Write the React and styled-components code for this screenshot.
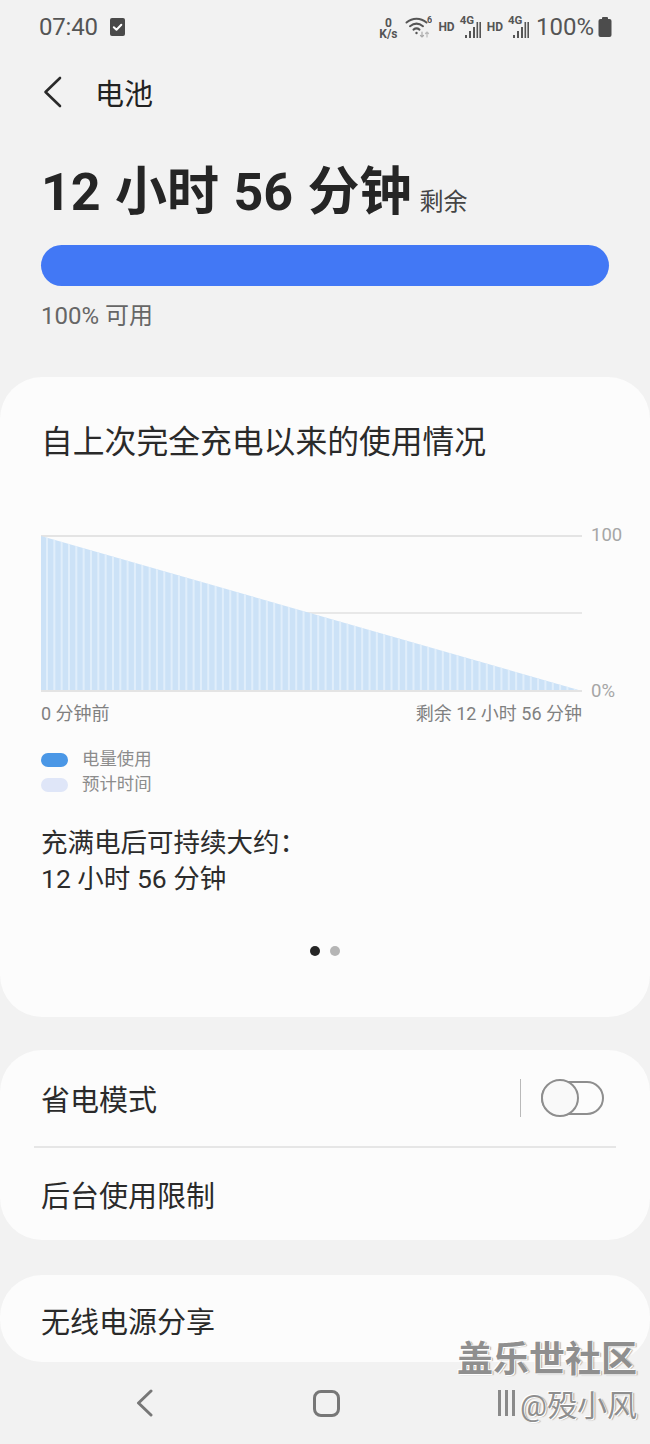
import styled, { createGlobalStyle } from "styled-components";

const GlobalStyle = createGlobalStyle`
  html, body {
    margin: 0;
    padding: 0;
    background: #f2f2f2;
  }
  body {
    font-family: Roboto, "Noto Sans CJK SC", sans-serif;
  }
`;

const Page = styled.div`
  position: relative;
  width: 650px;
  height: 1444px;
  overflow: hidden;
  background: #f2f2f2;
  color: #222;
`;

const StatusBar = styled.div`
  height: 54px;
  padding: 0 38px 0 39px;
  display: flex;
  align-items: center;
  justify-content: space-between;
  color: #555;
`;

const StatusGroup = styled.div`
  display: flex;
  align-items: center;
  gap: ${(p) => p.$gap || 0}px;
`;

const Clock = styled.span`
  font-size: 24px;
  letter-spacing: -0.2px;
`;

const Speed = styled.div`
  width: 22px;
  font-size: 12px;
  line-height: 11px;
  font-weight: 700;
  text-align: center;
  margin-top: 3px;
`;

const NetBlock = styled.div`
  display: flex;
  align-items: center;
  gap: 5px;
`;

const HdTag = styled.span`
  font-size: 12px;
  font-weight: 700;
`;

const SignalWrap = styled.div`
  position: relative;
  width: 21px;
  height: 24px;
`;

const FourG = styled.span`
  position: absolute;
  left: 0;
  top: -2px;
  font-size: 11.5px;
  line-height: 14px;
  font-weight: 700;
`;

const Percent = styled.span`
  font-size: 24px;
  margin: 0 -2px 0 1px;
`;

const Header = styled.div`
  height: 78px;
  padding: 0 0 0 43px;
  display: flex;
  align-items: center;
  gap: 33px;
  margin-top: -1px;
`;

const HeaderTitle = styled.h1`
  margin: 0;
  font-size: 29px;
  font-weight: 400;
`;

const Summary = styled.section`
  padding: 29px 41px 0;
`;

const Remaining = styled.div`
  display: flex;
  align-items: baseline;
  gap: 8px;
  height: 66px;
  line-height: 66px;
  white-space: nowrap;
`;

const RemainingValue = styled.span`
  font-size: 52px;
  font-weight: 700;
  word-spacing: 1.5px;
  color: #252525;
`;

const RemainingUnit = styled.span`
  font-size: 24px;
  color: #444;
`;

const Bar = styled.div`
  height: 41px;
  margin-top: 19px;
  border-radius: 21px;
  background: #4278f5;
`;

const Available = styled.div`
  margin-top: 13px;
  font-size: 24px;
  line-height: 34px;
  color: #666;
`;

const Card = styled.section`
  background: #fcfcfc;
  border-radius: 42px;
  margin-top: ${(p) => p.$top}px;
`;

const UsageCard = styled(Card)`
  height: 640px;
  padding: 43px 41px 0;
  box-sizing: border-box;
`;

const CardTitle = styled.h2`
  margin: 0;
  font-size: 31.8px;
  line-height: 44px;
  font-weight: 400;
  color: #2a2a2a;
`;

const ChartWrap = styled.div`
  margin-top: 71px;
  display: flex;
  gap: 9px;
  height: 157px;
`;

const Plot = styled.svg`
  display: block;
  flex: none;
  width: 541px;
  height: 157px;
`;

const YAxis = styled.div`
  flex: none;
  display: flex;
  flex-direction: column;
  justify-content: space-between;
  margin: -11px 0 -10px;
  font-size: 18.5px;
  line-height: 22px;
  color: #a6a6a6;
`;

const XAxis = styled.div`
  width: 541px;
  margin-top: 10px;
  display: flex;
  justify-content: space-between;
  font-size: 18px;
  line-height: 24px;
  color: #808080;
`;

const Legend = styled.div`
  margin-top: 21px;
  display: flex;
  flex-direction: column;
`;

const LegendRow = styled.div`
  display: flex;
  align-items: center;
  gap: 14px;
  font-size: 17.4px;
  line-height: 25px;
  color: #8c8c8c;
`;

const Swatch = styled.span`
  width: 27px;
  height: 14px;
  border-radius: 7px;
  background: ${(p) => p.$color};
`;

const Duration = styled.div`
  margin-top: 28px;
  font-size: 26.5px;
  line-height: 36px;
  color: #2c2c2c;
`;

const Dots = styled.div`
  margin-top: 49px;
  display: flex;
  justify-content: center;
  gap: 10px;
`;

const Dot = styled.span`
  width: 10px;
  height: 10px;
  border-radius: 50%;
  background: ${(p) => (p.$active ? "#252525" : "#b5b5b5")};
`;

const Row = styled.div`
  box-sizing: border-box;
  height: ${(p) => p.$height}px;
  padding: ${(p) => p.$shift || 0}px 46px 0 41px;
  display: flex;
  align-items: center;
  justify-content: space-between;
  font-size: 29px;
  color: #2a2a2a;
`;

const Divider = styled.div`
  height: 2px;
  margin: 0 34px;
  background: #e6e6e6;
`;

const ToggleArea = styled.div`
  display: flex;
  align-items: center;
  gap: 20px;
`;

const VLine = styled.span`
  width: 1px;
  height: 38px;
  background: #b9b9b9;
`;

const Toggle = styled.span`
  position: relative;
  box-sizing: border-box;
  width: 63px;
  height: 34px;
  border: 2px solid #8e8e8e;
  border-radius: 17px;
`;

const Knob = styled.span`
  position: absolute;
  left: -2px;
  top: -4px;
  box-sizing: border-box;
  width: 38px;
  height: 38px;
  border: 2px solid #8e8e8e;
  border-radius: 50%;
  background: #f9f9f9;
`;

const NavBar = styled.nav`
  height: 82px;
  padding: 0 0 0 136px;
  display: flex;
  align-items: center;
  color: #777;
`;

const HomeKey = styled.span`
  box-sizing: border-box;
  width: 27px;
  height: 27px;
  margin-left: 160px;
  border: 3px solid #777;
  border-radius: 8px;
`;

const RecentKey = styled.span`
  margin-left: 158px;
  width: 18px;
  height: 26px;
  background: repeating-linear-gradient(90deg, #8a8a8a 0 3px, transparent 3px 7px);
`;

const Watermark = styled.div`
  position: absolute;
  right: 13px;
  top: 1338px;
  text-align: right;
  white-space: nowrap;
  color: #8f8f8f;
  text-shadow: 1px 1px 0 #fff, -1px -1px 0 #fff, 2px 1px 1px rgba(90, 90, 90, 0.5);
  pointer-events: none;
`;

const WatermarkBrand = styled.div`
  font-size: 36px;
  line-height: 44px;
  font-weight: 700;
`;

const WatermarkUser = styled.div`
  font-size: 30px;
  line-height: 44px;
  margin-top: 2px;
`;

const Wifi = () => (
  <svg width="27" height="24" viewBox="0 0 27 24" fill="none" stroke="#555" strokeLinecap="round">
    <path d="M1.5 7.5C7.5 2.5 15.5 2.5 21.5 7.5" strokeWidth="2" />
    <path d="M5 11.2C9 8 14 8 18 11.2" strokeWidth="2" />
    <path d="M8.5 14.6C10.5 13 12.5 13 14.5 14.6" strokeWidth="2" />
    <circle cx="11.5" cy="18" r="1.2" fill="#555" stroke="none" />
    <path d="M17 17v5M15.5 20.5l1.5 1.5 1.5-1.5" stroke="#aaa" strokeWidth="1.2" />
    <path d="M22 22v-5M20.5 18.5l1.5-1.5 1.5 1.5" stroke="#bbb" strokeWidth="1.2" />
    <text x="22" y="8" fontSize="9" fontWeight="700" fill="#555" stroke="none" fontFamily="Roboto">6</text>
  </svg>
);

const Signal = () => (
  <svg width="21" height="24" viewBox="0 0 21 24" fill="#555">
    <rect x="5" y="20" width="2" height="3" />
    <rect x="9" y="16" width="2" height="7" />
    <rect x="13" y="12" width="2" height="11" />
    <rect x="16.5" y="7" width="1.6" height="16" />
    <rect x="19.4" y="7" width="1.6" height="16" />
  </svg>
);

const Battery = () => (
  <svg width="14" height="20" viewBox="0 0 14 20" fill="#4c4c4c">
    <rect x="4" y="0" width="6" height="3" rx="1" />
    <rect x="0.5" y="2" width="13" height="18" rx="2" />
  </svg>
);

const TaskIcon = () => (
  <svg width="15" height="18" viewBox="0 0 15 18">
    <rect width="15" height="18" rx="2" fill="#4a4a4a" />
    <path d="M3.8 9.2l2.7 2.6 4.8-5" fill="none" stroke="#fff" strokeWidth="2" strokeLinecap="round" strokeLinejoin="round" />
  </svg>
);

const BackIcon = () => (
  <svg width="19" height="32" viewBox="0 0 19 32" fill="none" stroke="#2a2a2a" strokeWidth="2.6" strokeLinecap="round" strokeLinejoin="round">
    <path d="M17 2L2.5 16 17 30" />
  </svg>
);

const NavBack = () => (
  <svg width="17" height="28" viewBox="0 0 17 28" fill="none" stroke="#777" strokeWidth="3" strokeLinecap="round" strokeLinejoin="round">
    <path d="M15 2L2.5 14 15 26" />
  </svg>
);

const stripes = Array.from({ length: 74 }, (_, i) => i * 7.33 + 5);

const UsageChart = () => (
  <Plot viewBox="0 0 541 157">
    <defs>
      <clipPath id="drain">
        <polygon points="0,1 541,156 0,156" />
      </clipPath>
    </defs>
    <line x1="0" x2="541" y1="1" y2="1" stroke="#e4e4e4" strokeWidth="2" />
    <line x1="0" x2="541" y1="78" y2="78" stroke="#e8e8e8" strokeWidth="2" />
    <g clipPath="url(#drain)">
      <rect x="0" y="0" width="541" height="157" fill="#cce2f7" />
      {stripes.map((x) => (
        <rect key={x} x={x} y="0" width="2" height="157" fill="#e0eefb" />
      ))}
    </g>
    <line x1="0" x2="541" y1="156" y2="156" stroke="#e4e4e4" strokeWidth="2" />
  </Plot>
);

const NetworkBlock = () => (
  <NetBlock>
    <HdTag>HD</HdTag>
    <SignalWrap>
      <FourG>4G</FourG>
      <Signal />
    </SignalWrap>
  </NetBlock>
);

const App = () => {
  return (
    <Page>
      <GlobalStyle />
      <StatusBar>
        <StatusGroup $gap={12}>
          <Clock>07:40</Clock>
          <TaskIcon />
        </StatusGroup>
        <StatusGroup $gap={6}>
          <Speed>
            0<br />K/s
          </Speed>
          <Wifi />
          <NetworkBlock />
          <NetworkBlock />
          <Percent>100%</Percent>
          <Battery />
        </StatusGroup>
      </StatusBar>

      <Header>
        <BackIcon />
        <HeaderTitle>电池</HeaderTitle>
      </Header>

      <Summary>
        <Remaining>
          <RemainingValue>12 小时 56 分钟</RemainingValue>
          <RemainingUnit>剩余</RemainingUnit>
        </Remaining>
        <Bar />
        <Available>100% 可用</Available>
      </Summary>

      <UsageCard $top={44}>
        <CardTitle>自上次完全充电以来的使用情况</CardTitle>
        <ChartWrap>
          <UsageChart />
          <YAxis>
            <span>100</span>
            <span>0%</span>
          </YAxis>
        </ChartWrap>
        <XAxis>
          <span>0 分钟前</span>
          <span>剩余 12 小时 56 分钟</span>
        </XAxis>
        <Legend>
          <LegendRow>
            <Swatch $color="#4a97e6" />
            电量使用
          </LegendRow>
          <LegendRow>
            <Swatch $color="#dfe6f8" />
            预计时间
          </LegendRow>
        </Legend>
        <Duration>
          充满电后可持续大约：
          <br />
          12 小时 56 分钟
        </Duration>
        <Dots>
          <Dot $active />
          <Dot />
        </Dots>
      </UsageCard>

      <Card $top={33}>
        <Row $height={96}>
          省电模式
          <ToggleArea>
            <VLine />
            <Toggle>
              <Knob />
            </Toggle>
          </ToggleArea>
        </Row>
        <Divider />
        <Row $height={92}>后台使用限制</Row>
      </Card>

      <Card $top={35}>
        <Row $height={87} $shift={3}>无线电源分享</Row>
      </Card>

      <NavBar>
        <NavBack />
        <HomeKey />
        <RecentKey />
      </NavBar>

      <Watermark>
        <WatermarkBrand>盖乐世社区</WatermarkBrand>
        <WatermarkUser>@殁小风</WatermarkUser>
      </Watermark>
    </Page>
  );
};

export default App;
